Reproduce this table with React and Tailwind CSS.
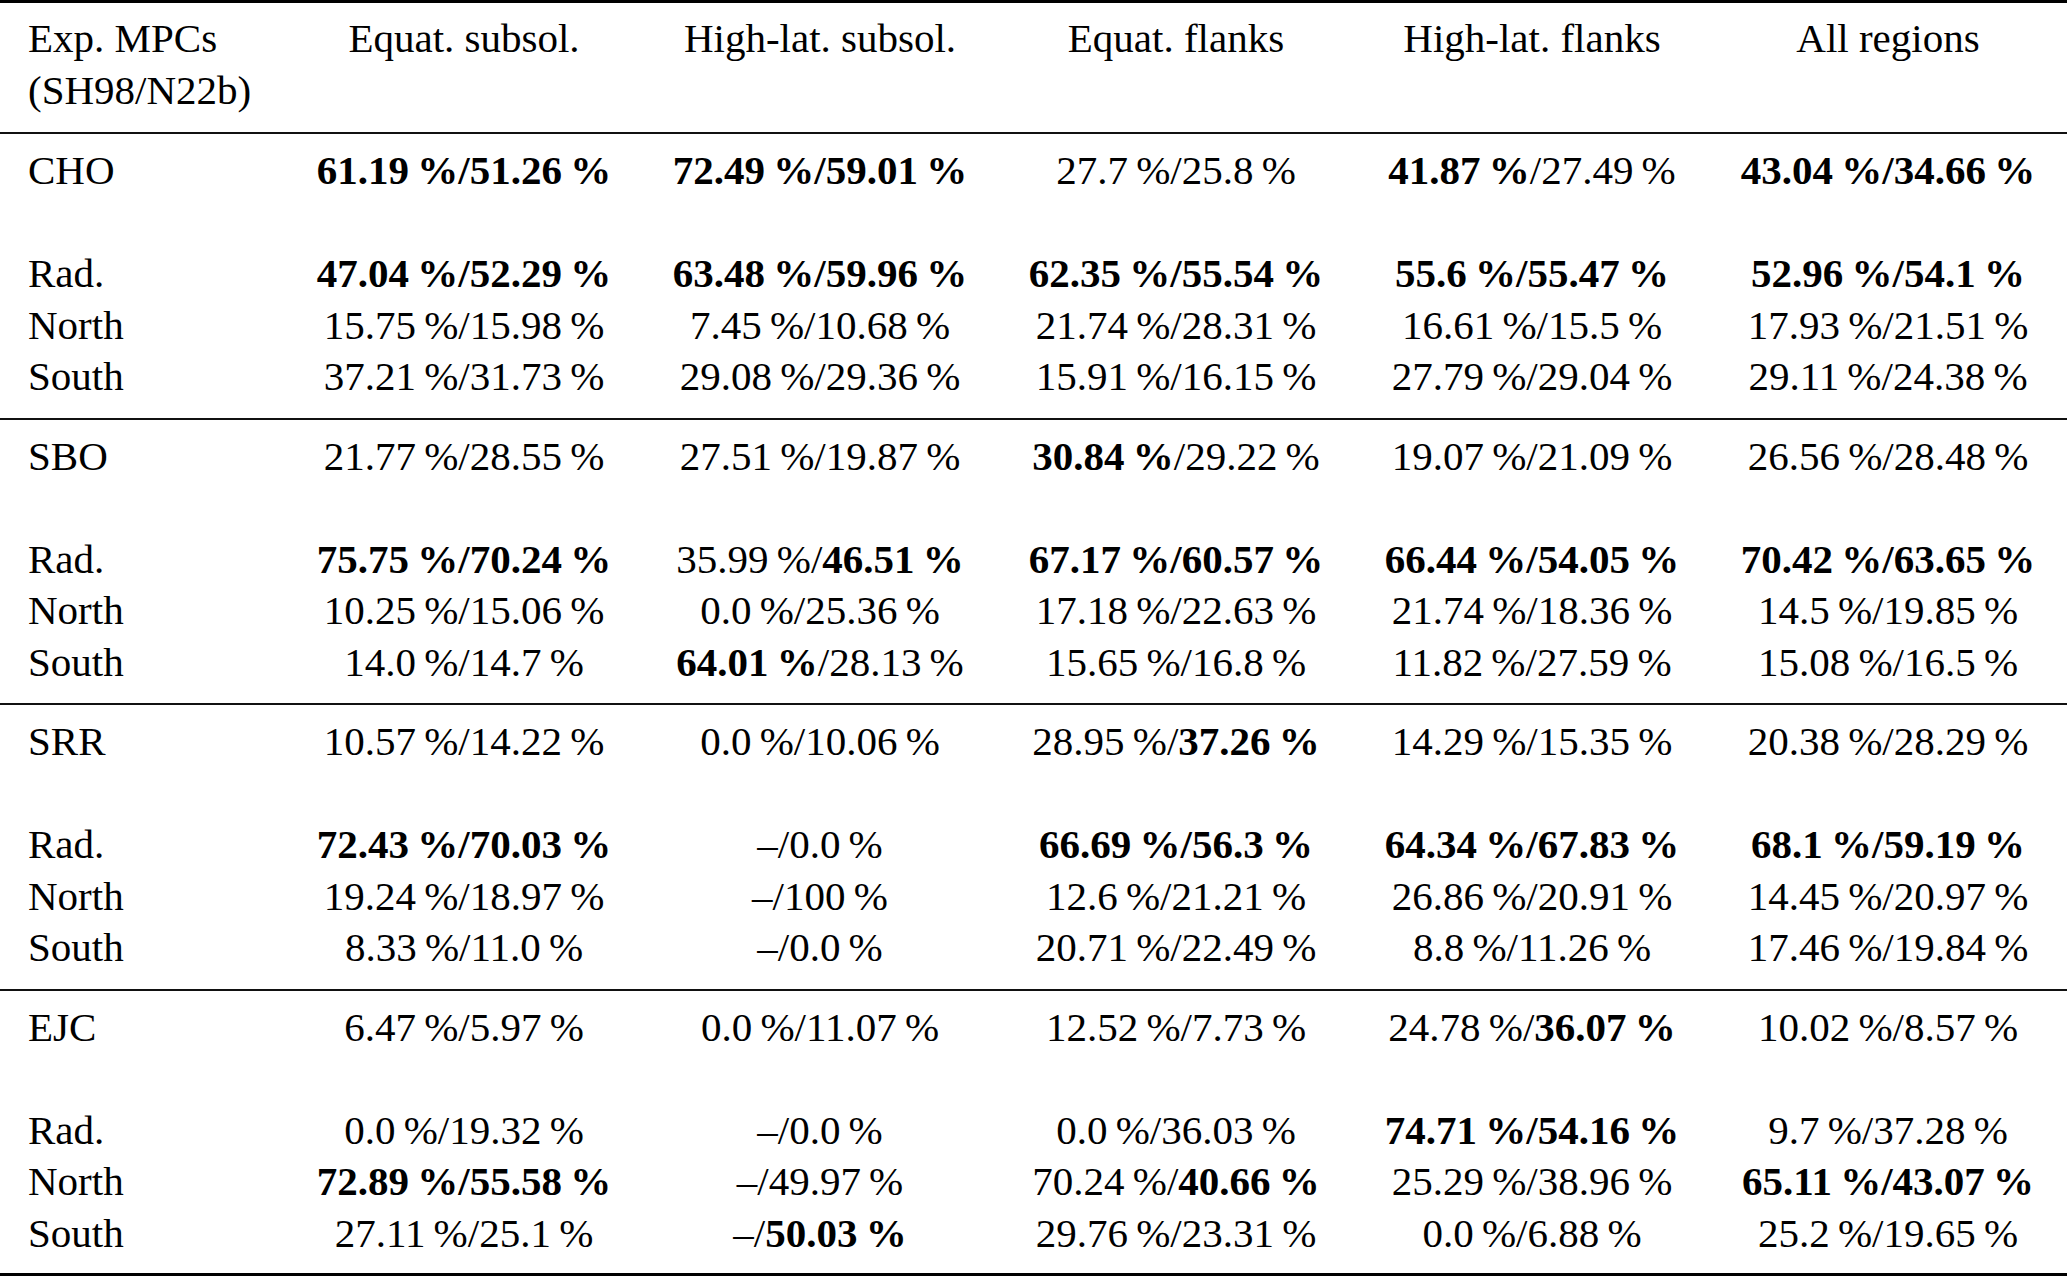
import React from "react";

const header = [
  "Equat. subsol.",
  "High-lat. subsol.",
  "Equat. flanks",
  "High-lat. flanks",
  "All regions",
];

// "*" marks a bold value, "–" is a missing value (no percent sign)
const groups = [
  {
    name: "CHO",
    cells: ["*61.19/*51.26", "*72.49/*59.01", "27.7/25.8", "*41.87/27.49", "*43.04/*34.66"],
    rows: [
      ["Rad.", ["*47.04/*52.29", "*63.48/*59.96", "*62.35/*55.54", "*55.6/*55.47", "*52.96/*54.1"]],
      ["North", ["15.75/15.98", "7.45/10.68", "21.74/28.31", "16.61/15.5", "17.93/21.51"]],
      ["South", ["37.21/31.73", "29.08/29.36", "15.91/16.15", "27.79/29.04", "29.11/24.38"]],
    ],
  },
  {
    name: "SBO",
    cells: ["21.77/28.55", "27.51/19.87", "*30.84/29.22", "19.07/21.09", "26.56/28.48"],
    rows: [
      ["Rad.", ["*75.75/*70.24", "35.99/*46.51", "*67.17/*60.57", "*66.44/*54.05", "*70.42/*63.65"]],
      ["North", ["10.25/15.06", "0.0/25.36", "17.18/22.63", "21.74/18.36", "14.5/19.85"]],
      ["South", ["14.0/14.7", "*64.01/28.13", "15.65/16.8", "11.82/27.59", "15.08/16.5"]],
    ],
  },
  {
    name: "SRR",
    cells: ["10.57/14.22", "0.0/10.06", "28.95/*37.26", "14.29/15.35", "20.38/28.29"],
    rows: [
      ["Rad.", ["*72.43/*70.03", "–/0.0", "*66.69/*56.3", "*64.34/*67.83", "*68.1/*59.19"]],
      ["North", ["19.24/18.97", "–/100", "12.6/21.21", "26.86/20.91", "14.45/20.97"]],
      ["South", ["8.33/11.0", "–/0.0", "20.71/22.49", "8.8/11.26", "17.46/19.84"]],
    ],
  },
  {
    name: "EJC",
    cells: ["6.47/5.97", "0.0/11.07", "12.52/7.73", "24.78/*36.07", "10.02/8.57"],
    rows: [
      ["Rad.", ["0.0/19.32", "–/0.0", "0.0/36.03", "*74.71/*54.16", "9.7/37.28"]],
      ["North", ["*72.89/*55.58", "–/49.97", "70.24/*40.66", "25.29/38.96", "*65.11/*43.07"]],
      ["South", ["27.11/25.1", "–/*50.03", "29.76/23.31", "0.0/6.88", "25.2/19.65"]],
    ],
  },
];

const part = (p) => {
  const bold = p.startsWith("*");
  const v = bold ? p.slice(1) : p;
  const text = v === "–" ? v : `${v}\u2009%`;
  return bold ? <span className="font-bold">{text}</span> : <span>{text}</span>;
};

const Cell = ({ value }) => {
  const [a, b] = value.split("/");
  const both = a.startsWith("*") && b.startsWith("*");
  return (
    <div className={`text-center whitespace-nowrap ${both ? "font-bold" : ""}`}>
      {part(a)}/{part(b)}
    </div>
  );
};

const Row = ({ label, cells }) => (
  <div className="grid grid-cols-[286px_repeat(5,356px)] h-[51.5px]">
    <div className="pl-[28px] whitespace-nowrap">{label}</div>
    {cells.map((c, i) => (
      <Cell key={i} value={c} />
    ))}
  </div>
);

export default function App() {
  return (
    <div className="w-[2067px] h-[1280px] bg-white text-black text-[41px] leading-[51.5px] overflow-hidden font-['Liberation_Serif','Times_New_Roman',serif]">
      <div className="border-t-[3px] border-black pt-[10px] pb-[16px]">
        <div className="grid grid-cols-[286px_repeat(5,356px)]">
          <div className="pl-[28px] whitespace-nowrap">
            Exp. MPCs
            <br />
            (SH98/N22b)
          </div>
          {header.map((h) => (
            <div key={h} className="text-center whitespace-nowrap">
              {h}
            </div>
          ))}
        </div>
      </div>
      {groups.map((g, gi) => (
        <div
          key={g.name}
          className={`border-t-2 border-[#111] pt-[11px] ${
            gi === groups.length - 1 ? "border-b-[3px] border-b-black pb-[14px]" : "pb-[15px]"
          }`}
        >
          <Row label={g.name} cells={g.cells} />
          <div className="h-[51.5px]" />
          {g.rows.map(([label, cells]) => (
            <Row key={label} label={label} cells={cells} />
          ))}
        </div>
      ))}
    </div>
  );
}
